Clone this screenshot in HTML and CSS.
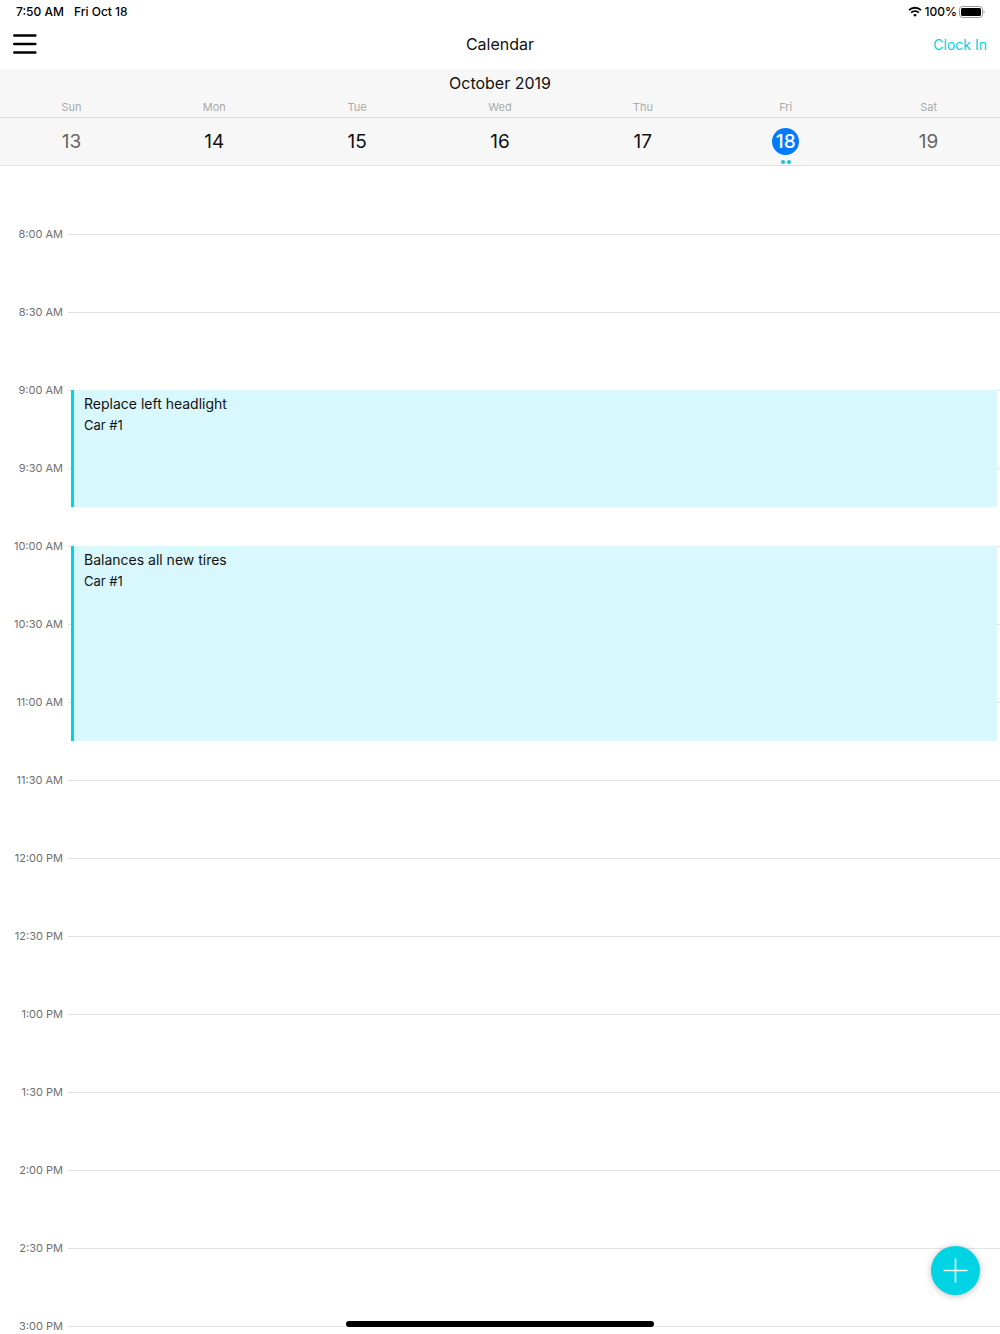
FILE: index.html
```html
<!DOCTYPE html>
<html lang="en">
<head>
  <meta charset="UTF-8" />
  <meta name="viewport" content="width=device-width, initial-scale=1" />
  <title>Calendar</title>
  <link rel="stylesheet" href="styles.css">
</head>
<body>
  <div class="status-bar">
    <span>7:50 AM</span>
    <span>Fri Oct 18</span>
    <div class="status-right">
      <svg class="wifi" viewBox="0 0 14 11" width="14" height="11" aria-hidden="true">
        <path d="M1 4.2a8.6 8.6 0 0 1 12 0" />
        <path d="M3.1 6.7a5.6 5.6 0 0 1 7.8 0" />
        <path class="wifi-dot" d="M7 10.8L5.1 8.9a2.7 2.7 0 0 1 3.8 0z" />
      </svg>
      <div class="charge">
        <span>100%</span>
        <svg class="battery" viewBox="0 0 26 12" width="26" height="12" aria-hidden="true">
          <rect class="battery-case" x="0.5" y="0.5" width="23" height="11" rx="3" />
          <rect x="2" y="2" width="20" height="8" rx="1.5" />
          <path class="battery-tip" d="M24.6 4.2c1.4 0.6 1.4 3 0 3.6z" />
        </svg>
      </div>
    </div>
  </div>

  <header class="navbar">
    <button class="menu-btn" aria-label="Menu">
      <svg viewBox="0 0 24 22" width="24" height="22" aria-hidden="true">
        <path d="M1.2 2.5h21.2M1.2 11h21.2M1.2 19.5h21.2" />
      </svg>
    </button>
    <h1>Calendar</h1>
    <button class="clock-btn">Clock In</button>
  </header>

  <section class="week">
    <h2>October 2019</h2>
    <div class="weekdays">
      <span>Sun</span>
      <span>Mon</span>
      <span>Tue</span>
      <span>Wed</span>
      <span>Thu</span>
      <span>Fri</span>
      <span>Sat</span>
    </div>
    <div class="days">
      <button class="day weekend"><span class="num">13</span></button>
      <button class="day"><span class="num">14</span></button>
      <button class="day"><span class="num">15</span></button>
      <button class="day"><span class="num">16</span></button>
      <button class="day"><span class="num">17</span></button>
      <button class="day selected"><span class="num">18</span><span class="dots"><i></i><i></i></span></button>
      <button class="day weekend"><span class="num">19</span></button>
    </div>
  </section>

  <!-- one grid row = 15 minutes -->
  <main class="timeline">
    <div class="slots">
      <div class="slot"><time>8:00 AM</time></div>
      <div class="slot"><time>8:30 AM</time></div>
      <div class="slot"><time>9:00 AM</time></div>
      <div class="slot"><time>9:30 AM</time></div>
      <div class="slot"><time>10:00 AM</time></div>
      <div class="slot"><time>10:30 AM</time></div>
      <div class="slot"><time>11:00 AM</time></div>
      <div class="slot"><time>11:30 AM</time></div>
      <div class="slot"><time>12:00 PM</time></div>
      <div class="slot"><time>12:30 PM</time></div>
      <div class="slot"><time>1:00 PM</time></div>
      <div class="slot"><time>1:30 PM</time></div>
      <div class="slot"><time>2:00 PM</time></div>
      <div class="slot"><time>2:30 PM</time></div>
      <div class="slot"><time>3:00 PM</time></div>
    </div>
    <article class="event event-headlight">
      <h3>Replace left headlight</h3>
      <p>Car #1</p>
    </article>
    <article class="event event-tires">
      <h3>Balances all new tires</h3>
      <p>Car #1</p>
    </article>
  </main>

  <button class="add-btn" aria-label="Add event">
    <svg viewBox="0 0 25 25" width="25" height="25" aria-hidden="true">
      <path d="M12.5 0.5v24M0.5 12.5h24" />
    </svg>
  </button>
  <div class="home-indicator"></div>
</body>
</html>
```
FILE: styles.css
```css
* {
  box-sizing: border-box;
}
body {
  margin: 0;
  height: 100vh;
  display: flex;
  flex-direction: column;
  overflow: hidden;
  background-color: #fff;
  color: #111;
  font-family: Inter, "Liberation Sans", sans-serif;
}
h1, h2, h3, p {
  margin: 0;
  font-weight: 400;
}
button {
  padding: 0;
  border: none;
  background: none;
  color: inherit;
  font: inherit;
  cursor: pointer;
}
svg {
  display: block;
}

/* status bar */
.status-bar {
  display: flex;
  align-items: center;
  gap: 10px;
  height: 23px;
  padding: 0 15px 0 16px;
  font-size: 12px;
  font-weight: 500;
  color: #000;
}
.status-right {
  display: flex;
  align-items: center;
  gap: 3px;
  margin-left: auto;
}
.charge {
  display: flex;
  align-items: center;
  gap: 2px;
}
.wifi {
  fill: none;
  stroke: #000;
  stroke-width: 1.8;
}
.wifi-dot {
  fill: #000;
  stroke: none;
}
.battery-case {
  fill: none;
  stroke: #999;
}
.battery-tip {
  fill: #999;
}

/* top navigation */
.navbar {
  display: grid;
  grid-template-columns: 1fr auto 1fr;
  align-items: center;
  height: 46px;
  padding: 0 13px 4px;
}
.menu-btn {
  justify-self: start;
}
.menu-btn path {
  stroke: #000;
  stroke-width: 2.4;
  stroke-linecap: round;
}
.navbar h1 {
  font-size: 16px;
}
.clock-btn {
  justify-self: end;
  font-size: 14px;
  color: #00d3e3;
}

/* week header */
.week {
  background-color: #f7f7f7;
  border-bottom: 1px solid #e2e2e2;
  text-align: center;
}
.week h2 {
  font-size: 16px;
  line-height: 28px;
}
.weekdays {
  display: grid;
  grid-template-columns: repeat(7, 1fr);
  border-bottom: 1px solid #dcdcdc;
  font-size: 11px;
  line-height: 20px;
  color: #aaa;
}
.days {
  display: grid;
  grid-template-columns: repeat(7, 1fr);
  height: 47px;
}
.day {
  display: flex;
  flex-direction: column;
  align-items: center;
  padding-top: 10px;
  font-size: 19px;
}
.num {
  width: 27px;
  line-height: 27px;
  border-radius: 50%;
}
.weekend {
  color: #666;
}
.selected .num {
  background-color: #007aff;
  color: #fff;
  font-weight: 500;
}
.dots {
  display: flex;
  gap: 2px;
  padding-top: 5px;
}
.dots i {
  width: 4px;
  height: 4px;
  border-radius: 50%;
  background-color: #14c4d8;
}

/* timeline */
.timeline {
  flex: 1;
  min-height: 0;
  display: grid;
  grid-template-columns: 71px 1fr;
  grid-template-rows: repeat(30, 39px);
  padding: 29px 3px 0 0;
}
.slots {
  grid-column: 1 / -1;
  grid-row: 1 / -1;
  margin-right: -3px;
}
.slot {
  display: flex;
  align-items: center;
  gap: 5px;
  height: 78px;
}
.slot time {
  width: 63px;
  text-align: right;
  font-size: 11px;
  color: #707070;
}
.slot::after {
  content: "";
  flex: 1;
  height: 1px;
  background-color: #e2e2e2;
}
.event {
  grid-column: 2;
  padding: 4px 10px;
  border-left: 3px solid #00d3e3;
  background-color: #d9f8fe;
}
.event-headlight {
  grid-row: 6 / span 3;
}
.event-tires {
  grid-row: 10 / span 5;
}
.event h3 {
  font-size: 14px;
  line-height: 20px;
}
.event p {
  font-size: 13px;
  line-height: 22px;
}

.add-btn {
  position: fixed;
  right: 20px;
  bottom: 39px;
  display: grid;
  place-items: center;
  width: 49px;
  height: 49px;
  border-radius: 50%;
  background-color: #00d3e3;
  box-shadow: 0 1px 7px rgba(0, 0, 0, 0.25);
}
.add-btn path {
  stroke: #fff;
  stroke-width: 1.6;
}
.home-indicator {
  position: fixed;
  left: 50%;
  bottom: 7px;
  width: 308px;
  height: 6px;
  border-radius: 3px;
  background-color: #000;
  transform: translateX(-50%);
}
```
